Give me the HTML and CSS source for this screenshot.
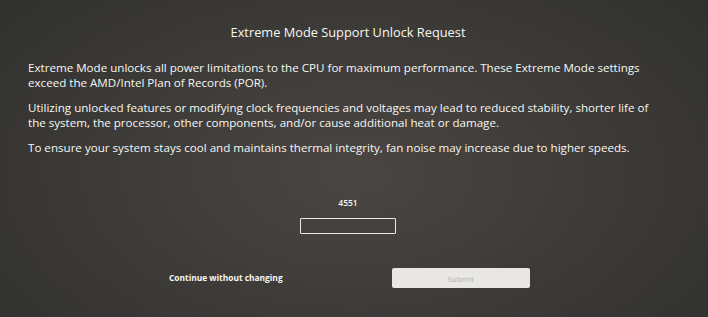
FILE: index.html
```html
<!DOCTYPE html>
<html lang="en">
<head>
    <meta charset="UTF-8">
    <meta name="viewport" content="width=device-width, initial-scale=1.0">
    <title>Extreme Mode Support Unlock Request</title>
    <link rel="stylesheet" href="styles.css">
</head>
<body>
    <div class="screen">
        <h1 class="title">Extreme Mode Support Unlock Request</h1>
        <div class="message">
            <p>Extreme Mode unlocks all power limitations to the CPU for maximum performance. These Extreme Mode settings exceed the AMD/Intel Plan of Records (POR).</p>
            <p>Utilizing unlocked features or modifying clock frequencies and voltages may lead to reduced stability, shorter life of the system, the processor, other components, and/or cause additional heat or damage.</p>
            <p>To ensure your system stays cool and maintains thermal integrity, fan noise may increase due to higher speeds.</p>
        </div>
        <div class="code-area">
            <div class="code">4551</div>
            <input type="text" class="code-input">
        </div>
        <div class="actions">
            <a class="btn-continue">Continue without changing</a>
            <button class="btn-submit">Submit</button>
        </div>
    </div>
</body>
</html>
```
FILE: styles.css
```css
html, body { margin: 0; height: 100%; }
body {
    font-family: "Open Sans", sans-serif;
    color: #f7f7f3;
    background: radial-gradient(ellipse 70% 90% at 50% 55%, #4a4642 0%, #3e3c39 45%, #2f2f2d 100%);
    overflow: hidden;
}
.screen { width: 696px; height: 317px; box-sizing: border-box; padding: 22px 0 0 0; }
.title { margin: 0; text-align: center; font-size: 12.8px; font-weight: 400; line-height: 20px; }
.message { width: 628px; margin: 18px 0 0 28px; font-size: 11.6px; line-height: 15px; font-weight: 500; }
.message p { margin: 0 0 10px 0; }
.code-area { display: flex; flex-direction: column; align-items: center; margin-top: 41px; }
.code { font-size: 8.5px; font-weight: 600; line-height: 14px; }
.code-input { width: 96px; height: 16px; margin-top: 8px; box-sizing: border-box; background: transparent; border: 1.5px solid #e8e8e4; border-radius: 1px; padding: 0; }
.actions { display: flex; align-items: center; margin-top: 34px; }
.btn-continue { margin-left: 169px; font-size: 8.4px; font-weight: 700; line-height: 20px; }
.btn-submit { margin-left: 109px; width: 138px; height: 20px; background: #e9e7e3; border: none; border-radius: 2px; color: #b3b1ad; font-family: "Open Sans", sans-serif; font-size: 8px; padding: 0; }
```
